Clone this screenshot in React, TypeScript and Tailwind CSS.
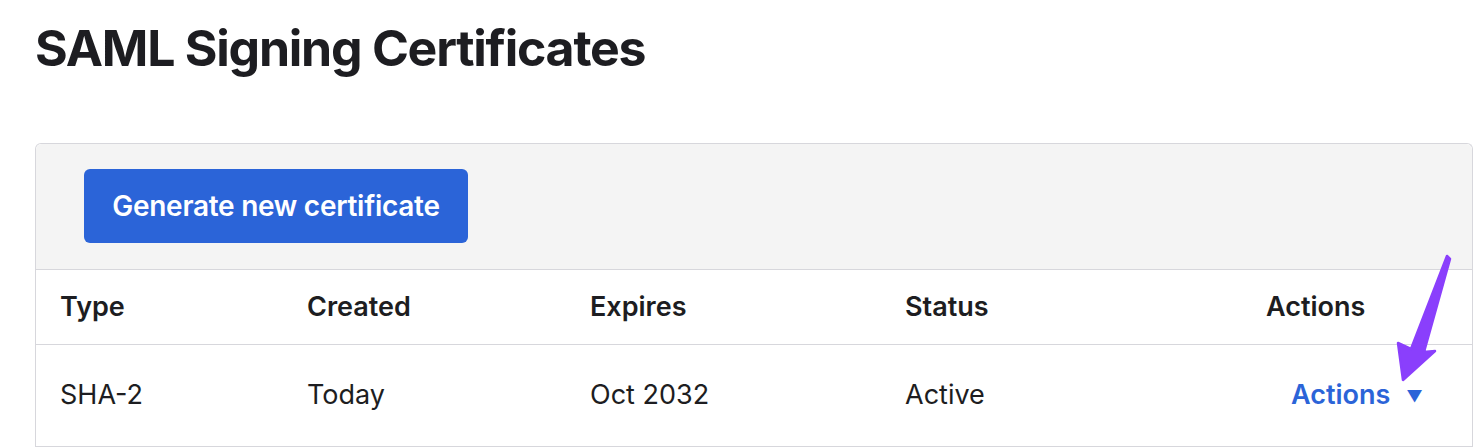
const columns = [
  { label: "Type", width: "w-[247px]" },
  { label: "Created", width: "w-[283px]" },
  { label: "Expires", width: "w-[315px]" },
  { label: "Status", width: "w-[358px]" },
  { label: "Actions", width: "flex-1" },
];

const row = ["SHA-2", "Today", "Oct 2032", "Active"];

export default function App() {
  return (
    <div className="relative w-[1482px] h-[448px] overflow-hidden bg-white font-['Inter','Liberation_Sans',sans-serif] text-[#1d1d21]">
      <div className="pl-[35px] pt-[20px]">
        <h1 className="text-[50px] font-bold leading-[56px] tracking-[-0.025em]">SAML Signing Certificates</h1>

        <div className="mt-[67px] w-[1438px] rounded-t-[6px] border border-b-0 border-[#d7d7dc]">
          <div className="flex h-[125px] items-start rounded-t-[6px] bg-[#f4f4f4] pl-[48px] pt-[25px]">
            <button className="h-[74px] w-[384px] rounded-[6px] bg-[#2b64d8] text-[28px] font-semibold tracking-[-0.01em] text-white">
              Generate new certificate
            </button>
          </div>

          <div className="flex h-[75px] items-center border-t border-[#d7d7dc] text-[27px] font-semibold">
            {columns.map((c) => (
              <div key={c.label} className={`${c.width} ${c.label === "Actions" ? "pl-[27px]" : "pl-[24px]"}`}>
                {c.label}
              </div>
            ))}
          </div>

          <div className="flex h-[103px] items-center border-y border-[#d7d7dc] text-[27px]">
            {row.map((v, i) => (
              <div key={v} className={`${columns[i].width} pl-[24px]`}>
                {v}
              </div>
            ))}
            <div className="flex flex-1 items-center gap-[16px] pl-[52px] font-semibold text-[#2b64d8]">
              <span>Actions</span>
              <span className="text-[16px]">▼</span>
            </div>
          </div>
        </div>
      </div>

      <svg className="absolute left-[1390px] top-[250px]" width="64" height="140" viewBox="0 0 64 140">
        <polygon
          points="57,6 60,9 34,102 45,101 13,130 8,93 21,99"
          fill="#8a3ffc"
          stroke="#8a3ffc"
          strokeWidth="2.5"
          strokeLinejoin="round"
        />
      </svg>
    </div>
  );
}
